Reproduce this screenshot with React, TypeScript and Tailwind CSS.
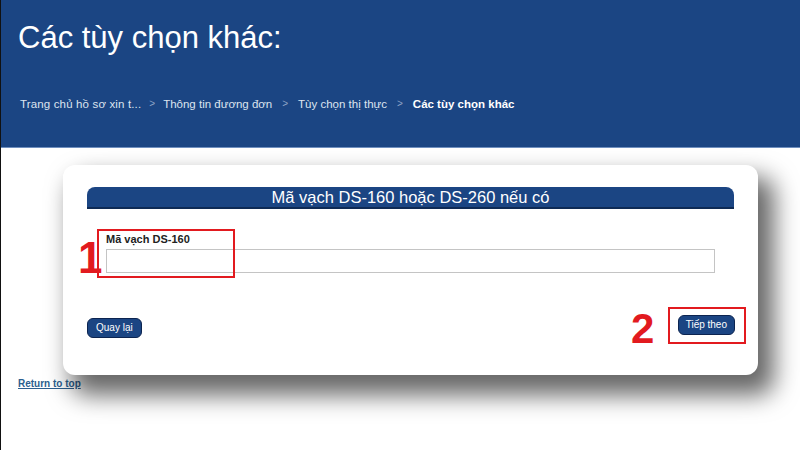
import React from "react";

export default function App() {
  const font = { fontFamily: '"Liberation Sans", Arial, sans-serif' };
  return (
    <div
      className="w-[800px] h-[450px] bg-white relative overflow-hidden border-l border-[#111]"
      style={font}
    >
      <div className="h-[148px] bg-[#1b4583] border-b border-[#6f8fbf] px-[17px] pt-[20px]">
        <h1 className="text-[31px] leading-[36px] text-white">Các tùy chọn khác:</h1>
        <div className="mt-[41px] flex items-center text-[11.5px] leading-[14px] text-[#dde4ef] ml-[2px]">
          <span className="tracking-[0.15px]">Trang chủ hồ sơ xin t...</span>
          <span className="mx-[8px] text-[#8ea3c6] text-[10px]">&gt;</span>
          <span>Thông tin đương đơn</span>
          <span className="mx-[10px] text-[#8ea3c6] text-[10px]">&gt;</span>
          <span>Tùy chọn thị thực</span>
          <span className="mx-[10px] text-[#8ea3c6] text-[10px]">&gt;</span>
          <span className="font-bold text-white">Các tùy chọn khác</span>
        </div>
      </div>

      <div className="ml-[62px] mt-[17px] w-[695px] h-[210px] bg-white rounded-[12px] shadow-[12px_16px_24px_4px_rgba(0,0,0,0.6)] px-[24px] pt-[22px] relative">
        <div className="h-[22px] bg-[#1b4583] rounded-t-[8px] border-b-2 border-[#0e2a55] text-white text-[16.5px] leading-[21px] text-center">
          Mã vạch DS-160 hoặc DS-260 nếu có
        </div>
        <div className="px-[19px] pt-[23px]">
          <div className="text-[11px] leading-[14px] font-bold text-[#222]">Mã vạch DS-160</div>
          <div className="mt-[3px] h-[24px] border border-[#c4c4c4] bg-white" />
        </div>
        <div className="flex justify-between items-start mt-[42px]">
          <button className="mt-[3px] h-[20px] px-[8px] bg-[#1b4583] border border-[#0c2450] rounded-[6px] text-white text-[10px] leading-[18px]">
            Quay lại
          </button>
          <button className="h-[20px] px-[7px] bg-[#1b4583] border border-[#0c2450] rounded-[6px] text-white text-[10px] leading-[18px] mr-[-1px]">
            Tiếp theo
          </button>
        </div>
      </div>

      <a className="block ml-[17px] mt-[3px] text-[10px] leading-[12px] font-bold text-[#2c5f8f] underline" href="#">
        Return to top
      </a>

      {/* annotations */}
      <div className="absolute left-[96px] top-[229px] w-[138px] h-[49px] border-2 border-[#e21a1f]" />
      <div className="absolute left-[77px] top-[230px] text-[44px] leading-[56px] font-bold text-[#e21a1f]">1</div>
      <div className="absolute left-[667px] top-[307px] w-[78px] h-[37px] border-2 border-[#e21a1f]" />
      <div className="absolute left-[630px] top-[302px] text-[42px] leading-[54px] font-bold text-[#e21a1f]">2</div>
    </div>
  );
}
